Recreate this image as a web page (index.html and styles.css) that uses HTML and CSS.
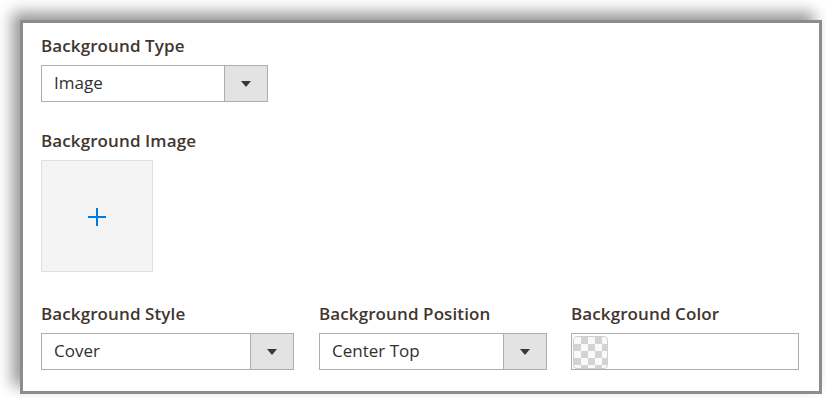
FILE: index.html
```html
<!DOCTYPE html>
<html>
<head>
<meta charset="utf-8">
<link rel="stylesheet" href="styles.css">
</head>
<body>
<div class="frame">
  <div class="field field-type">
    <div class="label">Background Type</div>
    <div class="select w-type"><span class="value">Image</span><span class="arrow"></span></div>
  </div>
  <div class="field field-image">
    <div class="label">Background Image</div>
    <div class="upload"><span class="plus"></span></div>
  </div>
  <div class="row">
    <div class="field">
      <div class="label">Background Style</div>
      <div class="select w-style"><span class="value">Cover</span><span class="arrow"></span></div>
    </div>
    <div class="field">
      <div class="label">Background Position</div>
      <div class="select w-pos"><span class="value">Center Top</span><span class="arrow"></span></div>
    </div>
    <div class="field">
      <div class="label">Background Color</div>
      <div class="color"><span class="swatch"></span></div>
    </div>
  </div>
</div>
</body>
</html>
```
FILE: styles.css
```css
html, body {
  margin: 0;
  padding: 0;
  background: #ffffff;
}
body {
  font-family: "Open Sans", "Liberation Sans", sans-serif;
  color: #41362f;
  width: 826px;
  height: 398px;
  overflow: hidden;
}
.frame {
  box-sizing: border-box;
  margin: 20px 0 0 20px;
  width: 802px;
  height: 374px;
  border: 3px solid #8e8b8b;
  background: #ffffff;
  box-shadow: -8px -8px 14px rgba(0, 0, 0, 0.4);
  padding: 12px 0 0 18px;
}
.label {
  font-size: 17px;
  font-weight: 600;
  line-height: 21px;
  height: 21px;
  margin-bottom: 9px;
  color: #41362f;
  letter-spacing: 0.1px;
}
.field-image {
  margin-top: 28px;
}
.select {
  box-sizing: border-box;
  display: flex;
  align-items: stretch;
  height: 37px;
  border: 1px solid #adadad;
  background: #ffffff;
}
.w-type { width: 227px; }
.w-style { width: 253px; }
.w-pos { width: 228px; }
.value {
  flex: 1;
  font-size: 17px;
  line-height: 33px;
  padding-left: 12px;
  color: #303030;
}
.arrow {
  width: 42px;
  background: #e3e3e3;
  border-left: 1px solid #adadad;
  display: flex;
  align-items: center;
  justify-content: center;
}
.arrow::after {
  content: "";
  width: 0;
  height: 0;
  border-left: 5px solid transparent;
  border-right: 5px solid transparent;
  border-top: 6px solid #41362f;
  margin-top: 1px;
}
.upload {
  box-sizing: border-box;
  width: 112px;
  height: 112px;
  background: #f4f4f4;
  border: 1px solid #e0e0e0;
  display: flex;
  align-items: center;
  justify-content: center;
}
.plus {
  position: relative;
  width: 18px;
  height: 18px;
  margin-top: 1px;
}
.plus::before,
.plus::after {
  content: "";
  position: absolute;
  background: #007bdb;
}
.plus::before {
  left: 0;
  top: 8px;
  width: 18px;
  height: 2px;
}
.plus::after {
  left: 8px;
  top: 0;
  width: 2px;
  height: 18px;
}
.row {
  display: flex;
  gap: 25px;
  margin-top: 31px;
}
.row .field:nth-child(3) {
  margin-left: -1px;
}
.color {
  box-sizing: border-box;
  width: 228px;
  height: 37px;
  border: 1px solid #adadad;
  padding: 2px 1px;
  background: #ffffff;
}
.swatch {
  display: block;
  box-sizing: border-box;
  width: 35px;
  height: 33px;
  border: 1px solid #cfcfcf;
  border-radius: 4px;
  background-color: #ffffff;
  background-image: conic-gradient(#d3d3d3 25%, #fafafa 0 50%, #d3d3d3 0 75%, #fafafa 0);
  background-size: 14px 14px;
  background-position: 0 0;
}
```
